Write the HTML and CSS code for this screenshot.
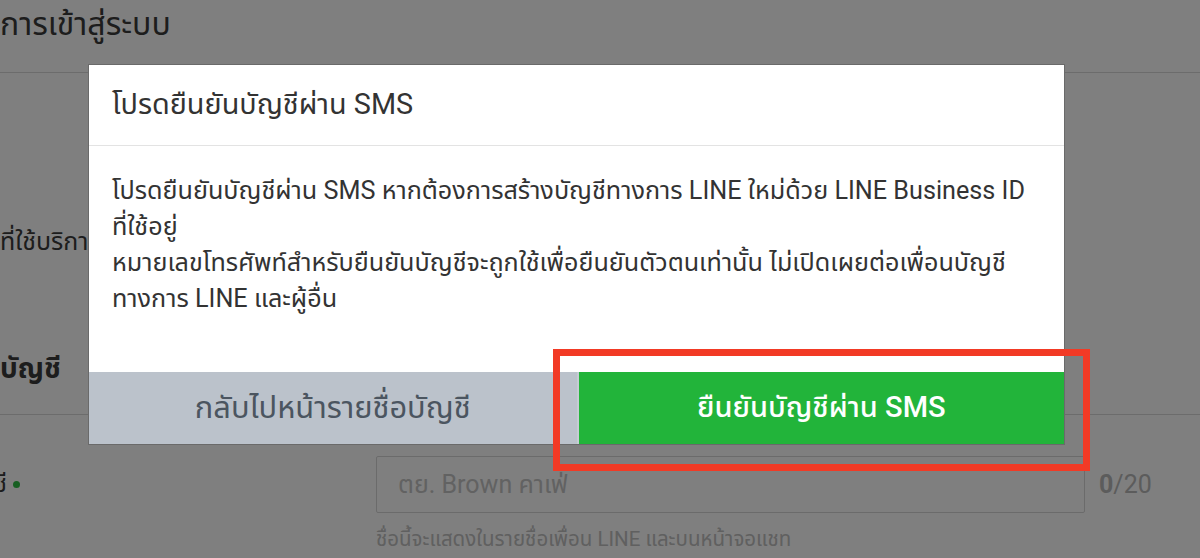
FILE: index.html
```html
<!DOCTYPE html>
<html lang="th">
<head>
<meta charset="utf-8">
<title>ยืนยันบัญชีผ่าน SMS</title>
<link rel="stylesheet" href="styles.css">
</head>
<body>
<div class="page">
  <header class="page-head">
    <h1 class="page-title">การเข้าสู่ระบบ</h1>
  </header>
  <section class="sec sec-login">
    <p class="sec-text">ที่ใช้บริการ</p>
  </section>
  <section class="sec sec-account">
    <h2 class="sec-title">บัญชี</h2>
    <div class="field">
      <div class="field-label"><span class="label-text">ชื่อบัญชี</span><span class="req"></span></div>
      <div class="field-body">
        <div class="input-row">
          <div class="input">ตย. Brown คาเฟ่</div>
          <span class="count"><b>0</b>/20</span>
        </div>
        <p class="help">ชื่อนี้จะแสดงในรายชื่อเพื่อน LINE และบนหน้าจอแชท</p>
      </div>
    </div>
  </section>
</div>

<div class="overlay"></div>

<div class="modal">
  <div class="modal-head">โปรดยืนยันบัญชีผ่าน SMS</div>
  <div class="modal-body">
    <p>โปรดยืนยันบัญชีผ่าน SMS หากต้องการสร้างบัญชีทางการ LINE ใหม่ด้วย LINE Business ID<br>ที่ใช้อยู่</p>
    <p>หมายเลขโทรศัพท์สำหรับยืนยันบัญชีจะถูกใช้เพื่อยืนยันตัวตนเท่านั้น ไม่เปิดเผยต่อเพื่อนบัญชี<br>ทางการ LINE และผู้อื่น</p>
  </div>
  <div class="modal-foot">
    <button class="btn btn-back">กลับไปหน้ารายชื่อบัญชี</button>
    <button class="btn btn-ok">ยืนยันบัญชีผ่าน SMS</button>
  </div>
</div>

<div class="highlight"></div>
</body>
</html>
```

FILE: styles.css
```css
* { box-sizing: border-box; }
html, body {
  margin: 0;
  padding: 0;
}
body {
  width: 1200px;
  height: 558px;
  overflow: hidden;
  position: relative;
  background: #fff;
  font-family: Roboto, "Noto Sans Thai", "Noto Sans", "DejaVu Sans", sans-serif;
  color: #333;
}

.page { width: 1200px; }

.page-head {
  height: 73px;
  border-bottom: 1px solid #d9d9d9;
  display: flex;
  align-items: flex-start;
}
.page-title {
  margin: 2px 0 0 0;
  font-size: 32px;
  font-weight: 400;
  line-height: 44px;
  color: #3a3a3a;
}

.sec-login {
  height: 341px;
  padding-top: 151px;
}
.sec-text {
  margin: 0;
  font-size: 25px;
  line-height: 36px;
  color: #3a3a3a;
  white-space: nowrap;
}

.sec-title {
  margin: -68px 0 0 0;
  height: 68px;
  font-size: 28px;
  font-weight: 700;
  line-height: 44px;
  color: #3a3a3a;
}
.sec-account {
  border-top: 1px solid #d9d9d9;
}

.field {
  display: grid;
  grid-template-columns: 376px 1fr;
  padding-top: 41px;
}
.field-label {
  display: flex;
  align-items: center;
  justify-content: flex-end;
  width: 20px;
  height: 57px;
  gap: 6px;
  font-size: 24px;
  color: #3a3a3a;
  white-space: nowrap;
}
.req {
  flex: none;
  width: 7px;
  height: 7px;
  border-radius: 50%;
  background: #2fbf45;
}

.input-row {
  display: flex;
  align-items: center;
  gap: 14px;
}
.input {
  width: 709px;
  height: 57px;
  border: 1px solid #d6d6d6;
  border-radius: 2px;
  padding: 0 21px;
  display: flex;
  align-items: center;
  font-size: 25px;
  color: #c4c4c4;
}
.count {
  font-size: 25px;
  color: #b8b8b8;
}
.count b { font-weight: 700; }
.help {
  margin: 12px 0 0 0;
  font-size: 20.5px;
  line-height: 28px;
  color: #c0c0c0;
  white-space: nowrap;
}

.overlay {
  position: absolute;
  inset: 0;
  background: rgba(0, 0, 0, 0.5);
}

.modal {
  position: absolute;
  left: 88px;
  top: 64px;
  width: 977px;
  height: 381px;
  background: #fff;
  border: 1px solid #6a6a6a;
  display: flex;
  flex-direction: column;
}
.modal-head {
  height: 81px;
  padding: 0 23px;
  display: flex;
  align-items: center;
  font-size: 28.8px;
  color: #333;
  border-bottom: 1px solid #e3e3e3;
}
.modal-body {
  flex: 1;
  padding: 27px 23px 0;
  font-size: 25.2px;
  line-height: 36px;
  color: #333;
  white-space: nowrap;
}
.modal-body p { margin: 0; }

.modal-foot {
  display: grid;
  grid-template-columns: 1fr 1fr;
  height: 72px;
}
.btn {
  border: 0;
  margin: 0;
  font-family: inherit;
  cursor: pointer;
}
.btn-back {
  background: #bbc2cb;
  color: #4b5560;
  font-size: 30.8px;
}
.btn-ok {
  background: #22b43a;
  color: #fff;
  font-size: 29px;
  font-weight: 500;
  border-left: 2px solid #c6ccd3;
}

.highlight {
  position: absolute;
  left: 553px;
  top: 349px;
  width: 537px;
  height: 122px;
  border: 7px solid #f23a25;
}
```
